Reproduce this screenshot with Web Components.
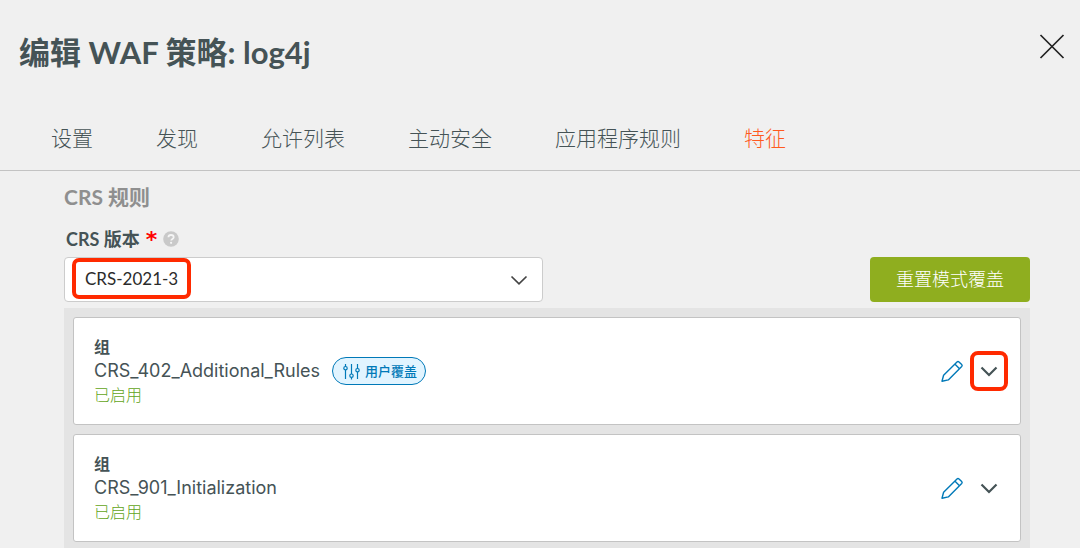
<!DOCTYPE html>
<html lang="zh-CN">
<head>
<meta charset="utf-8">
<meta name="viewport" content="width=device-width, initial-scale=1">
<title>编辑 WAF 策略: log4j</title>
<style>
  :root {
    --ink: #455356;
    --line: #c3c3c3;
    --mark: #ff2a00;
    --ui: Lato, "Noto Sans CJK SC", sans-serif;
    --data: Inter, "Noto Sans CJK SC", sans-serif;
  }
  body { margin: 0; background: #f0f0f0; color: var(--ink); font-family: var(--ui); }
</style>
</head>
<body>
<waf-dialog>
  <dialog-header slot="header">编辑 WAF 策略: log4j</dialog-header>
  <tab-bar slot="tabs" tabs="设置,发现,允许列表,主动安全,应用程序规则,特征" active="特征"></tab-bar>
  <version-picker></version-picker>
  <rule-list>
    <rule-group name="CRS_402_Additional_Rules" marked><override-badge slot="badge">用户覆盖</override-badge></rule-group>
    <rule-group name="CRS_901_Initialization"></rule-group>
  </rule-list>
</waf-dialog>
<script>
function define(name, html, setup) {
  const template = document.createElement('template');
  template.innerHTML = html;
  customElements.define(name, class extends HTMLElement {
    constructor() {
      super();
      this.attachShadow({ mode: 'open' }).append(template.content.cloneNode(true));
    }
    connectedCallback() { if (setup) setup(this, this.shadowRoot); }
  });
}

define('waf-dialog', `
<style>
  :host { display: flex; flex-direction: column; min-height: 100vh; }
  main { flex: 1; display: flex; flex-direction: column; padding: 12px 50px 0 64px; }
  h2 { margin: 0 0 16px; font-size: 21px; line-height: 28px; font-weight: 700; color: #8f8f8f; }
</style>
<slot name="header"></slot>
<slot name="tabs"></slot>
<main><h2>CRS 规则</h2><slot></slot></main>`);

define('dialog-header', `
<style>
  :host { display: flex; justify-content: space-between; align-items: flex-start; padding: 32px 14px 0 19px; }
  h1 { margin: 0; font-size: 31px; line-height: 40px; font-weight: 700; }
  button { padding: 0; border: 0; background: none; display: flex; }
  svg { width: 28px; height: 28px; }
</style>
<h1><slot></slot></h1>
<button type="button" aria-label="关闭"><svg viewBox="0 0 28 28" fill="none" stroke="#222" stroke-width="1.7"><path d="M2.5 3 25.5 26M25.5 3 2.5 26"/></svg></button>`);

define('tab-bar', `
<style>
  :host { display: block; border-bottom: 1px solid var(--line); padding: 48px 0 14px 51px; }
  nav { display: flex; gap: 63px; }
  a { font-size: 21px; line-height: 36px; font-weight: 300; color: var(--ink); text-decoration: none; white-space: nowrap; }
  a[aria-current] { color: #ff5a1f; }
</style>
<nav></nav>`, (host, root) => {
  const nav = root.querySelector('nav');
  nav.replaceChildren(...host.getAttribute('tabs').split(',').map(label => {
    const a = document.createElement('a');
    a.href = '#';
    a.textContent = label;
    if (label === host.getAttribute('active')) a.setAttribute('aria-current', 'page');
    return a;
  }));
});

define('version-picker', `
<style>
  :host { display: block; margin-bottom: 6px; }
  .label { display: flex; align-items: center; gap: 6px; height: 24px; padding-left: 2px; margin-bottom: 6px; font-size: 18px; line-height: 24px; font-weight: 700; }
  .req { color: #f00; font: 700 22px/24px "DejaVu Sans", sans-serif; padding-top: 2px; }
  .help { width: 16px; height: 16px; }
  .row { display: grid; grid-template-columns: 1fr 1fr; gap: 8px; align-items: center; }
  .field { position: relative; }
  select { appearance: none; display: block; box-sizing: border-box; width: 100%; height: 45px; padding: 0 48px 2px 20px; border: 1px solid #ccc; border-radius: 4px; background: #fff; color: #2b2b2b; font: 400 17px var(--ui); }
  .chev { position: absolute; right: 15px; top: 14px; width: 18px; height: 18px; pointer-events: none; }
  .mark { position: absolute; left: 8px; top: 1px; bottom: 3px; width: 111px; border: 4px solid var(--mark); border-radius: 7px; pointer-events: none; }
  .reset { justify-self: end; width: 160px; height: 45px; padding: 0 0 4px; border: 0; border-radius: 4px; background: #8fae1f; color: #fff; font: 300 18px var(--ui); }
</style>
<div class="label"><label for="v">CRS 版本</label><span class="req">*</span>
<svg class="help" viewBox="0 0 16 16" role="img" aria-label="帮助"><circle cx="8" cy="8" r="7.8" fill="#c9c9c9"/><path d="M5.4 6.3C5.5 4.8 6.5 4 8 4s2.7.8 2.7 2.2c0 1.7-2.5 1.8-2.5 3.4" fill="none" stroke="#f5f5f5" stroke-width="1.8"/><circle cx="8.1" cy="11.8" r="1.1" fill="#f5f5f5"/></svg></div>
<div class="row">
  <div class="field">
    <select id="v"><option>CRS-2021-3</option></select>
    <svg class="chev" viewBox="0 0 18 18" fill="none" stroke="#444" stroke-width="1.7"><path d="M1.5 5.5 9 12.8 16.500 5.5"/></svg>
    <span class="mark"></span>
  </div>
  <button class="reset" type="button">重置模式覆盖</button>
</div>`);

define('rule-list', `
<style>
  :host { flex: 1; display: flex; flex-direction: column; gap: 9px; padding: 9px 9px 6px; background: #e4e4e4; }
</style>
<slot></slot>`);

define('rule-group', `
<style>
  :host { display: flex; align-items: center; justify-content: space-between; padding: 17px 12px 17px 20px; border: 1px solid var(--line); border-radius: 3px; background: #fff; }
  .kind, .name, .state { font-size: 16px; line-height: 24px; }
  .kind { font-weight: 700; }
  .name { display: flex; align-items: center; gap: 12px; height: 24px; font-family: var(--data); font-size: 18px; }
  .state { color: #62a420; font-weight: 300; }
  .actions { display: flex; align-items: center; gap: 6px; }
  button { display: flex; align-items: center; justify-content: center; box-sizing: border-box; padding: 0; border: 0; background: none; }
  .edit { width: 24px; height: 24px; }
  .edit svg { width: 24px; height: 24px; }
  .open { width: 38px; height: 40px; border: 4px solid transparent; border-radius: 8px; }
  .open svg { width: 18px; height: 18px; }
  :host([marked]) .open { border-color: var(--mark); }
</style>
<div>
  <div class="kind">组</div>
  <div class="name"><span></span><slot name="badge"></slot></div>
  <div class="state">已启用</div>
</div>
<div class="actions">
  <button class="edit" type="button" aria-label="编辑"><svg viewBox="0 0 24 24" fill="none" stroke="#0079b8" stroke-width="1.4" stroke-linejoin="round"><path d="M3.600 16.300 17 2.900Q18 1.900 19 2.900L21.700 5.600Q22.600 6.500 21.700 7.500L8.300 20.900 2 22.200ZM14.800 5.100 19.500 9.800"/></svg></button>
  <button class="open" type="button" aria-label="展开"><svg viewBox="0 0 18 18" fill="none" stroke="#455356" stroke-width="2.200"><path d="M1.500 5.500 9 13 16.500 5.500"/></svg></button>
</div>`, (host, root) => {
  root.querySelector('.name span').textContent = host.getAttribute('name');
});

define('override-badge', `
<style>
  :host { display: flex; align-items: center; gap: 5px; box-sizing: border-box; height: 28px; padding: 0 8px 0 10px; border: 1px solid #0079b8; border-radius: 14px; background: #e1f4ff; color: #0079b8; font: 500 13px/24px var(--ui); }
  svg { width: 17px; height: 17px; }
</style>
<svg viewBox="0 0 17 17" fill="none" stroke="currentColor" stroke-width="1.200"><path d="M2.500 1V3.500M2.500 7V16M8.500 1V11M8.500 14.500V16.500M14.500 1V5.500M14.500 9V16"/><circle cx="2.500" cy="5.200" r="1.700"/><circle cx="8.500" cy="12.700" r="1.700"/><circle cx="14.500" cy="7.200" r="1.700"/></svg>
<slot></slot>`);
</script>
</body>
</html>
